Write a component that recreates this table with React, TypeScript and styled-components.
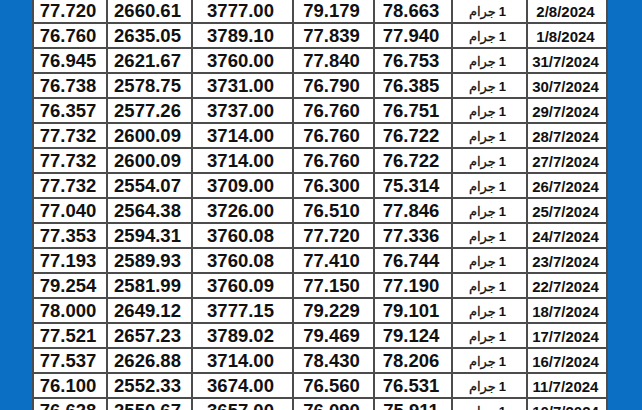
import React from "react";
import styled, { createGlobalStyle } from "styled-components";

const GlobalStyle = createGlobalStyle`
  html, body {
    margin: 0;
    padding: 0;
    background: #0b6fc3;
    overflow: hidden;
  }
  body {
    font-family: "Liberation Sans", Arial, sans-serif;
  }
`;

const Page = styled.div`
  width: 642px;
  height: 410px;
  overflow: hidden;
  background: #0b6fc3;
  display: flex;
  justify-content: flex-start;
  padding-left: 32px;
  box-sizing: border-box;
`;

const Table = styled.div`
  margin-top: -3px;
  display: flex;
  flex-direction: column;
  border-left: 2px solid #4c4c4c;
  border-top: 2px solid #4c4c4c;
  background: #fff;
  align-self: flex-start;
`;

const Row = styled.div`
  display: grid;
  grid-template-columns: 74px 85px 101px 81px 78px 75px 80px;
  height: 25px;
`;

const Cell = styled.div<{ $kind?: "num" | "gram" | "date" }>`
  box-sizing: border-box;
  border-right: 2px solid #4c4c4c;
  border-bottom: 2px solid #4c4c4c;
  display: flex;
  align-items: center;
  justify-content: center;
  color: #111;
  font-weight: 700;
  white-space: nowrap;
  padding-right: ${(p) => (p.$kind === "date" ? "3px" : "4px")};
  padding-top: 1px;
  font-size: ${(p) =>
    p.$kind === "date" ? "15px" : p.$kind === "gram" ? "13px" : "18.5px"};
  line-height: 1;
`;

const Gram = styled.span`
  direction: rtl;
  unicode-bidi: isolate;
  font-family: "Liberation Sans", "DejaVu Sans", sans-serif;
  display: inline-flex;
  gap: 3px;
  align-items: baseline;
`;

const GramWord = styled.span`
  font-family: "DejaVu Sans", sans-serif;
  font-weight: 400;
  font-size: 13px;
  -webkit-text-stroke: 0.3px #111;
`;

const rows: [string, string, string, string, string, string][] = [
  ["77.720", "2660.61", "3777.00", "79.179", "78.663", "2/8/2024"],
  ["76.760", "2635.05", "3789.10", "77.839", "77.940", "1/8/2024"],
  ["76.945", "2621.67", "3760.00", "77.840", "76.753", "31/7/2024"],
  ["76.738", "2578.75", "3731.00", "76.790", "76.385", "30/7/2024"],
  ["76.357", "2577.26", "3737.00", "76.760", "76.751", "29/7/2024"],
  ["77.732", "2600.09", "3714.00", "76.760", "76.722", "28/7/2024"],
  ["77.732", "2600.09", "3714.00", "76.760", "76.722", "27/7/2024"],
  ["77.732", "2554.07", "3709.00", "76.300", "75.314", "26/7/2024"],
  ["77.040", "2564.38", "3726.00", "76.510", "77.846", "25/7/2024"],
  ["77.353", "2594.31", "3760.08", "77.720", "77.336", "24/7/2024"],
  ["77.193", "2589.93", "3760.08", "77.410", "76.744", "23/7/2024"],
  ["79.254", "2581.99", "3760.09", "77.150", "77.190", "22/7/2024"],
  ["78.000", "2649.12", "3777.15", "79.229", "79.101", "18/7/2024"],
  ["77.521", "2657.23", "3789.02", "79.469", "79.124", "17/7/2024"],
  ["77.537", "2626.88", "3714.00", "78.430", "78.206", "16/7/2024"],
  ["76.100", "2552.33", "3674.00", "76.560", "76.531", "11/7/2024"],
  ["76.628", "2550.67", "3657.00", "76.090", "75.911", "10/7/2024"],
];

export default function App() {
  return (
    <>
      <GlobalStyle />
      <Page>
        <Table>
          {rows.map((r, i) => (
            <Row key={i}>
              <Cell $kind="num">{r[0]}</Cell>
              <Cell $kind="num">{r[1]}</Cell>
              <Cell $kind="num">{r[2]}</Cell>
              <Cell $kind="num">{r[3]}</Cell>
              <Cell $kind="num">{r[4]}</Cell>
              <Cell $kind="gram">
                <Gram dir="rtl">
                  <span>1</span>
                  <GramWord>جرام</GramWord>
                </Gram>
              </Cell>
              <Cell $kind="date">{r[5]}</Cell>
            </Row>
          ))}
        </Table>
      </Page>
    </>
  );
}
